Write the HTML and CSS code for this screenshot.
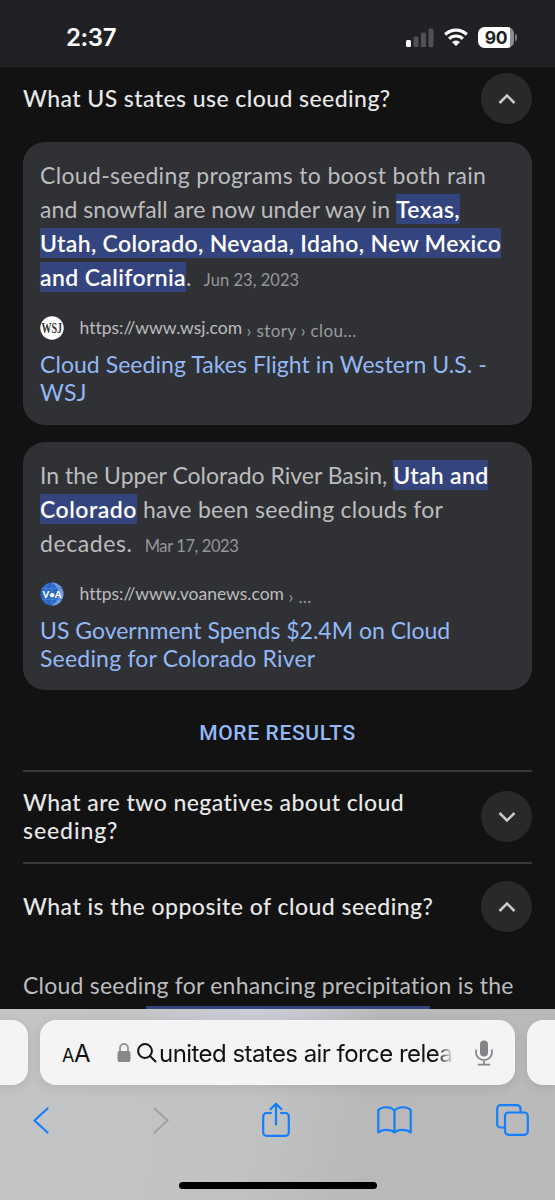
FILE: index.html
```
<!DOCTYPE html>
<html lang="en">
<head>
<meta charset="utf-8">
<title>Cloud seeding</title>
<link rel="stylesheet" href="styles.css">
</head>
<body>
<header class="status">
  <span class="clock">2:37</span>
  <div class="indicators">
    <svg class="signal" width="28" height="19" viewBox="0 0 28 19"><rect x="0" y="12" width="5" height="7" rx="1.5" fill="#fff"/><g fill="#505155"><rect x="7.500" y="8.500" width="5" height="10.500" rx="1.500"/><rect x="15" y="4.500" width="5" height="14.500" rx="1.500"/><rect x="22.500" y="0.500" width="5" height="18.500" rx="1.500"/></g></svg>
    <svg class="wifi" width="24" height="18" viewBox="0 0 24 18"><g fill="none" stroke="#fff" stroke-width="3.200"><path d="M1.200 6.500a15.300 15.300 0 0 1 21.600 0"/><path d="M5.200 10.800a9.700 9.700 0 0 1 13.600 0"/></g><path d="M12 18l-4-4a5.800 5.800 0 0 1 8 0z" fill="#fff"/></svg>
    <span class="battery">90</span>
    <span class="battery-tip"></span>
  </div>
</header>
<main class="page">
  <section class="question first">
    <h2 class="q-title"><span class="q1">What US states use cloud seeding?</span></h2>
    <span class="toggle"><svg width="18" height="12" viewBox="0 0 18 12"><path d="M1.500 10L9 2.500l7.500 7.500"/></svg></span>
  </section>
  <article class="card">
    <p class="answer">
      <span class="line a1">Cloud-seeding programs to boost both rain</span>
      <span class="line a2">and snowfall are now under way in <mark>Texas,</mark></span>
      <span class="line a3"><mark>Utah, Colorado, Nevada, Idaho, New Mexico</mark></span>
      <span class="line a4"><mark>and California</mark>.<span class="date">Jun 23, 2023</span></span>
    </p>
    <div class="source">
      <svg class="favicon" width="24" height="24" viewBox="0 0 24 24"><circle cx="12" cy="12" r="11.700" fill="#fff"/><text x="1.500" y="17" textLength="20.500" lengthAdjust="spacingAndGlyphs" class="wsj">WSJ</text></svg>
      <span class="url u1">https://www.wsj.com</span><span class="crumb c1">› story › clou...</span>
    </div>
    <h3 class="link"><span class="line t1">Cloud Seeding Takes Flight in Western U.S. -</span><span class="line t2">WSJ</span></h3>
  </article>
  <article class="card">
    <p class="answer">
      <span class="line b1">In the Upper Colorado River Basin, <mark>Utah and</mark></span>
      <span class="line b2"><mark>Colorado</mark> have been seeding clouds for</span>
      <span class="line b3">decades.<span class="date mar">Mar 17, 2023</span></span>
    </p>
    <div class="source">
      <svg class="favicon" width="24" height="24" viewBox="0 0 24 24"><circle cx="12" cy="12" r="11.500" fill="#2865c5"/><path d="M12 .5a11.500 11.500 0 0 1 0 23c9-7 9-16 0-23z" fill="#6f9adb"/><path d="M12 .5v23M2 6.500h20M2 17.500h20M7 2q-5 10 0 20" fill="none" stroke="#4880d0"/><text x="2.500" y="15.500" textLength="19" lengthAdjust="spacingAndGlyphs" class="voa">V•A</text></svg>
      <span class="url u2">https://www.voanews.com</span><span class="crumb c2">› ...</span>
    </div>
    <h3 class="link"><span class="line t3">US Government Spends $2.4M on Cloud</span><span class="line t4">Seeding for Colorado River</span></h3>
  </article>
  <div class="more">MORE RESULTS</div>
  <section class="question ruled">
    <h2 class="q-title"><span class="line q2">What are two negatives about cloud</span><span class="line q3">seeding?</span></h2>
    <span class="toggle"><svg width="18" height="12" viewBox="0 0 18 12"><path d="M1.500 2L9 9.500 16.500 2"/></svg></span>
  </section>
  <section class="question ruled last">
    <h2 class="q-title"><span class="q4">What is the opposite of cloud seeding?</span></h2>
    <span class="toggle"><svg width="18" height="12" viewBox="0 0 18 12"><path d="M1.500 10L9 2.500l7.500 7.500"/></svg></span>
  </section>
  <p class="answer tail"><span class="line d1">Cloud seeding for enhancing precipitation is the</span></p>
  <div class="tail-mark"></div>
</main>
<footer class="browser">
  <div class="tabs">
    <div class="tab side-left"></div>
    <div class="tab address">
      <span class="aa"><small>A</small>A</span>
      <svg class="lock" width="14" height="19" viewBox="0 0 14 19"><path d="M3 9V5a4 4 0 0 1 8 0v4" fill="none" stroke="#929296" stroke-width="1.800"/><rect x="0.500" y="8" width="13" height="11" rx="2" fill="#88888c"/></svg>
      <svg class="glass" width="20" height="20" viewBox="0 0 20 20"><g fill="none" stroke="#111" stroke-width="2" stroke-linecap="round"><circle cx="8" cy="8" r="6.900"/><path d="M13 13l5.500 5.500"/></g></svg>
      <span class="query">united states air force relea</span>
      <svg class="mic" width="18" height="26" viewBox="0 0 18 26"><rect x="5" y="0.500" width="8" height="16" rx="4" fill="#858589"/><path d="M1 10v2.500a8 7.500 0 0 0 16 0V10M9 20v4.500M3.500 24.600h11" fill="none" stroke="#858589" stroke-width="1.700" stroke-linecap="round"/></svg>
    </div>
    <div class="tab side-right"></div>
  </div>
  <nav class="tools">
    <svg width="16" height="27" viewBox="0 0 16 27"><path d="M14.500 1.500L1.500 13.500l13 12"/></svg>
    <svg class="off" width="16" height="27" viewBox="0 0 16 27"><path d="M1.500 1.500l13 12-13 12"/></svg>
    <svg width="28" height="36" viewBox="0 0 28 36"><path d="M9 11H4.500A3.300 3.300 0 0 0 1.200 14.300v16.200a3.300 3.300 0 0 0 3.300 3.300h19a3.300 3.300 0 0 0 3.300-3.300V14.300A3.300 3.300 0 0 0 23.500 11H19M14 22.500V1.800M8.500 7.200L14 1.700l5.500 5.500"/></svg>
    <svg width="35" height="28" viewBox="0 0 35 28"><path d="M17.500 4.500C14 .5 5.500 0 1.300 4v22.500c4-3.500 12.500-3.500 16.200 0 3.700-3.500 12.200-3.500 16.200 0V4C29.500 0 21 .5 17.500 4.500v22"/></svg>
    <svg width="33" height="32" viewBox="0 0 33 32"><rect x="9" y="8.500" width="22.800" height="22.300" rx="3.500"/><path d="M9 23.500H4.500a3.300 3.300 0 0 1-3.300-3.300V4.500a3.300 3.300 0 0 1 3.300-3.300h16.700a3.300 3.300 0 0 1 3.300 3.300v4"/></svg>
  </nav>
  <div class="home"></div>
</footer>
</body>
</html>
```
FILE: styles.css
```
* { box-sizing: border-box; }
body {
  margin: 0;
  width: 555px;
  height: 1200px;
  display: flex;
  flex-direction: column;
  overflow: hidden;
  background: #121212;
  font-family: Lato, "Open Sans", sans-serif;
  font-variant-ligatures: none;
}
h2, h3, p { margin: 0; }
svg { display: block; flex: none; }

.status {
  height: 67px;
  flex: none;
  display: flex;
  justify-content: space-between;
  align-items: center;
  padding: 7px 38px 0 66px;
  background: #202124;
  color: #fff;
  font-family: Inter, sans-serif;
}
.clock { font-size: 24px; font-weight: 600; letter-spacing: -.4px; }
.indicators { display: flex; align-items: center; }
.wifi { margin: 0 10px 0 10px; }
.battery {
  width: 36px;
  height: 21px;
  border-radius: 6.500px;
  background: linear-gradient(90deg, #fff 90%, #8c8d90 90%);
  color: #202124;
  font-size: 17.500px;
  font-weight: 700;
  letter-spacing: -.4px;
  line-height: 21px;
  text-align: center;
}
.battery-tip { width: 2px; height: 7px; margin-left: 1px; border-radius: 0 2px 2px 0; background: #77787b; }

.page { height: 942px; flex: none; padding: 0 23px; overflow: hidden; }
.question { display: flex; align-items: center; justify-content: space-between; }
.first { height: 75px; align-items: flex-start; }
.first .toggle { margin-top: 6px; }
.first .q-title { margin-top: 17px; }
.q-title { font-size: 23px; font-weight: 500; line-height: 28.500px; color: #e8e8e8; white-space: nowrap; }
.q1, .q2 { letter-spacing: .43px; }
.q3 { letter-spacing: .9px; }
.q4 { letter-spacing: .48px; }
.toggle {
  width: 51px;
  height: 51px;
  border-radius: 50%;
  background: #292929;
  display: flex;
  align-items: center;
  justify-content: center;
}
.toggle svg { fill: none; stroke: #c7c8ca; stroke-width: 2.600; }
.card {
  padding: 16px 17px 17px;
  border-radius: 22px;
  background: #303135;
}
.card + .card { margin-top: 17px; }
.card:first-of-type { height: 283px; }
.line { display: block; white-space: nowrap; }
.answer { font-size: 23px; line-height: 34px; color: #bcbcbe; }
.a1 { letter-spacing: .34px; }
.a2 { letter-spacing: .06px; }
.a2 mark { letter-spacing: .4px; }
.a3 { letter-spacing: .32px; }
.a4 { letter-spacing: .37px; }
.b1 mark { letter-spacing: .3px; }
.b2 { letter-spacing: .26px; }
.b2 mark { letter-spacing: .5px; }
.b3 { letter-spacing: .6px; }
.d1 { letter-spacing: .22px; }
.t1 { letter-spacing: .05px; }
.t2 { letter-spacing: .3px; }
.t4 { letter-spacing: .2px; }
mark { background: #34447e; color: #fff; font-weight: 600; padding: 1px 0; }
.date { margin-left: 12px; font-size: 16.500px; letter-spacing: .05px; color: #96979a; }
.mar { letter-spacing: -.4px; }
.source { display: flex; align-items: center; height: 24px; margin: 19px 0 9.500px; white-space: nowrap; }
.favicon { margin-left: -.5px; }
.url { margin: -2px 0 0 16px; font-size: 17.500px; color: #bcbcbe; }
.crumb { margin: 4px 0 0 4.500px; font-size: 17px; color: #9b9c9f; }
.c1, .c2 { letter-spacing: .38px; }
.wsj { font: 700 15px "Liberation Serif", serif; fill: #333; }
.voa { font: 900 9px Lato, sans-serif; fill: #fff; }
.link { font-size: 23px; font-weight: 400; line-height: 28.500px; color: #92b8f6; }
.card + .card .link { padding-bottom: .5px; }
.more {
  height: 80px;
  text-align: center;
  color: #92b8f6;
  font: 500 21px/86px Roboto, sans-serif;
  letter-spacing: .65px;
}
.ruled { height: 92px; padding-bottom: 1px; border-top: 2px solid #37383b; }
.ruled .q-title { padding-bottom: 1px; }
.last { height: 90px; padding-bottom: 3px; }
.tail { padding-top: 16px; }
.tail-mark { width: 284px; height: 30px; margin: 4px 0 0 122.500px; background: #34447e; }

.browser {
  height: 191px;
  flex: none;
  padding-top: 11px;
  overflow: hidden;
  background: radial-gradient(ellipse at 45% 0, rgba(205,208,220,.8), rgba(205,208,220,0) 30%), linear-gradient(100deg, #c3c4c6, #c1c3c3 45%, #b9b9ba 65%, #bababb);
}
.tabs { display: flex; gap: 12px; }
.tab { height: 65px; border-radius: 16px; background: #f4f4f5; box-shadow: 0 3px 12px rgba(0,0,0,.09); flex: none; }
.side-left { width: 28px; border-radius: 0 16px 16px 0; }
.side-right { width: 28px; border-radius: 16px 0 0 16px; }
.address {
  width: 475px;
  display: flex;
  align-items: center;
  padding: 0 22px 0 22px;
  color: #111;
  font-family: Inter, sans-serif;
  white-space: nowrap;
}
.aa { width: 55px; font-size: 24px; letter-spacing: -.5px; padding-top: 1px; }
.aa small { font-size: 18px; }
.glass { margin: 0 2px 0 6px; }
.query {
  width: 295px;
  padding-top: 1px;
  font-size: 24px;
  letter-spacing: -.55px;
  -webkit-mask-image: linear-gradient(90deg, #000 94%, rgba(0,0,0,.15) 99%);
  mask-image: linear-gradient(90deg, #000 94%, rgba(0,0,0,.15) 99%);
}
.mic { margin-left: auto; }
.tools {
  display: grid;
  grid-template-columns: repeat(5, 117.800px);
  place-items: center;
  height: 36px;
  margin: 17px 0 0 -18px;
}
.tools svg { fill: none; stroke: #147efb; stroke-width: 2.200; stroke-linecap: round; stroke-linejoin: round; }
.tools .off { margin-left: 5px; stroke: #a0a0a7; }
.home { width: 198px; height: 7px; margin: 44px auto 0; border-radius: 4px; background: #000; }
```
